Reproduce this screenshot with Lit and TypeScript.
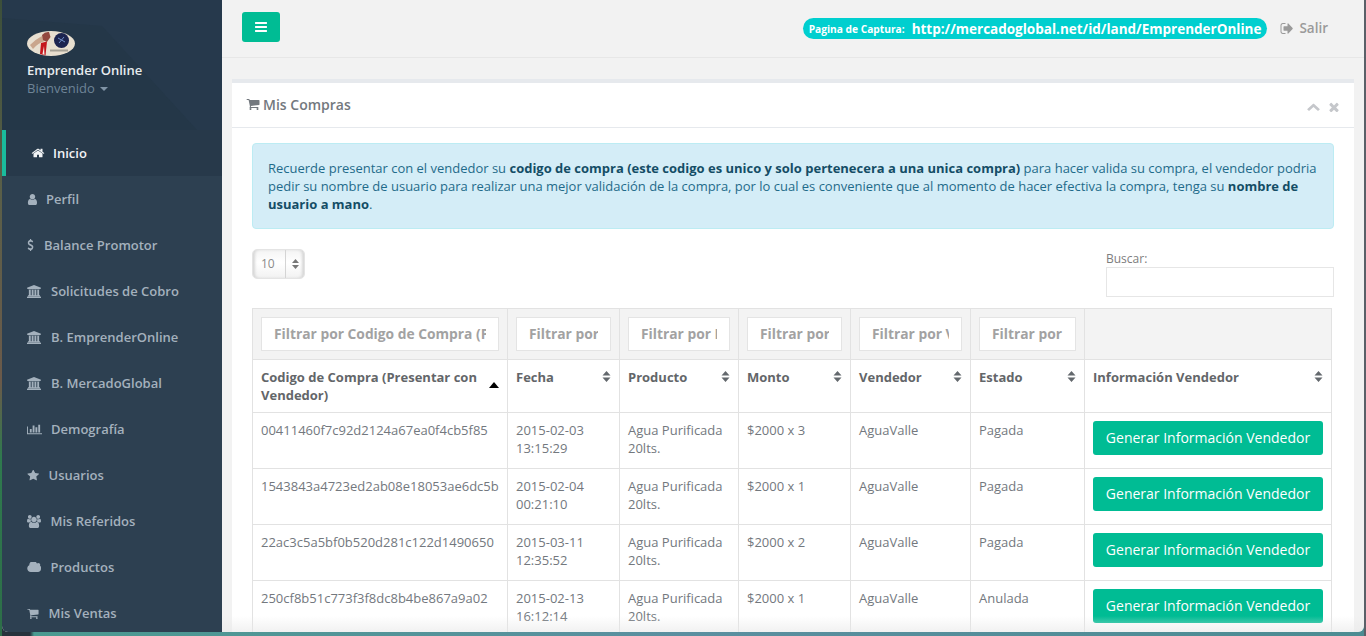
import { LitElement, html, css, svg } from 'lit';
import { customElement } from 'lit/decorators.js';

const ICONS: Record<string, [string, string]> = {
  home: ['0 0 1792 1792', 'M1472 992v480q0 26-19 45t-45 19h-384v-384h-256v384h-384q-26 0-45-19t-19-45v-480q0-1 .5-3t.5-3l575-474 575 474q1 2 1 6zm223-69l-62 74q-8 9-21 11h-3q-13 0-21-7l-692-577-692 577q-12 8-24 7-13-2-21-11l-62-74q-8-10-7-23.5t11-21.5l719-599q32-26 76-26t76 26l244 204v-195q0-14 9-23t23-9h192q14 0 23 9t9 23v408l219 182q10 8 11 21.5t-7 23.5z'],
  user: ['128 128 1408 1536', 'M1536 1399q0 109-62.5 187t-150.5 78h-854q-88 0-150.5-78t-62.5-187q0-85 8.5-160.5t31.5-152 58.5-131 94-89 134.5-34.5q131 128 313 128t313-128q76 0 134.5 34.5t94 89 58.5 131 31.5 152 8.5 160.5zm-256-887q0 159-112.5 271.5t-271.5 112.5-271.5-112.5-112.5-271.5 112.5-271.5 271.5-112.5 271.5 112.5 112.5 271.5z'],
  dollar: ['320 64 1152 1664', 'M1362 1185q0 153-99.5 263.5t-258.5 136.5v175q0 14-9 23t-23 9h-135q-13 0-22.5-9.5t-9.5-22.5v-175q-66-9-127.5-31t-101.5-44.5-74-48-46.5-37.5-17.5-18q-17-21-2-41l103-135q7-10 23-12 15-2 24 9l2 2q113 99 243 125 37 8 74 8 81 0 142.5-43t61.5-122q0-28-15-53t-33.5-42-58.5-37.5-66-32-80-32.5q-39-16-61.5-25t-61.5-26.5-62.5-31-56.5-35.5-53.5-42.5-43.5-49-35.5-58-21-66.5-8.5-78q0-138 98-242t255-134v-180q0-13 9.5-22.5t22.5-9.5h135q14 0 23 9t9 23v176q57 6 110.5 23t87 33.5 63.5 37.5 39 29 15 14q17 18 5 38l-81 146q-8 15-23 16-14 3-27-7-3-3-14.5-12t-39-26.5-58.5-32-74.5-26-85.5-11.5q-95 0-155 43t-60 111q0 26 8.5 48t29.5 41.5 39.5 33 56 31 60.5 27 70 27.5q53 20 81 31.5t76 35 75.5 42.5 62 50 53 63.5 31.5 76.5 13 94z'],
  bank: ['0 0 1920 1792', 'M960 0l960 384v128h-128q0 26-20.5 45t-48.5 19h-1526q-28 0-48.5-19t-20.5-45h-128v-128zm-704 640h256v768h128v-768h256v768h128v-768h256v768h128v-768h256v768h59q28 0 48.5 19t20.5 45v64h-1664v-64q0-26 20.5-45t48.5-19h59v-768zm1595 960q28 0 48.5 19t20.5 45v128h-1920v-128q0-26 20.5-45t48.5-19h1782z'],
  chart: ['0 0 2048 1792', 'M640 896v512h-256v-512h256zm384-512v1024h-256v-1024h256zm1024 1152v128h-2048v-1152h128v1024h1920zm-640-896v768h-256v-768h256zm384-384v1152h-256v-1152h256z'],
  star: ['0 64 1728 1664', 'M1728 647q0 22-26 48l-363 354 86 500q1 7 1 20 0 21-10.5 35.5t-30.5 14.5q-19 0-40-12l-449-236-449 236q-22 12-40 12-21 0-31.5-14.5t-10.5-35.5q0-6 2-20l86-500-364-354q-25-27-25-48 0-37 56-46l502-73 225-455q19-41 49-41t49 41l225 455 502 73q56 9 56 46z'],
  users: ['0 0 1920 1792', 'M593 896q-162 5-265 128h-134q-82 0-138-40.5t-56-118.5q0-353 124-353 6 0 43.5 21t97.5 42.5 119 21.5q67 0 133-23-5 37-5 66 0 139 81 256zm1071 637q0 120-73 189.5t-194 69.5h-874q-121 0-194-69.5t-73-189.5q0-53 3.5-103.5t14-109 26.5-108.5 43-97.5 62-81 85.5-53.5 111.5-20q10 0 43 21.5t73 48 107 48 135 21.5 135-21.5 107-48 73-48 43-21.5q61 0 111.5 20t85.5 53.5 62 81 43 97.5 26.5 108.5 14 109 3.5 103.5zm-1024-1277q0 106-75 181t-181 75-181-75-75-181 75-181 181-75 181 75 75 181zm704 384q0 159-112.5 271.5t-271.5 112.5-271.5-112.5-112.5-271.5 112.5-271.5 271.5-112.5 271.5 112.5 112.5 271.5zm576 225q0 78-56 118.5t-138 40.5h-134q-103-123-265-128 81-117 81-256 0-29-5-66 66 23 133 23 59 0 119-21.5t97.5-42.5 43.5-21q124 0 124 353zm-128-609q0 106-75 181t-181 75-181-75-75-181 75-181 181-75 181 75 75 181z'],
  cloud: ['0 256 1792 1280', 'M1792 1152q0 159-112.5 271.5t-271.5 112.5h-928q-185 0-316.5-131.5t-131.5-316.5q0-132 71-241.5t187-163.5q-2-28-2-43 0-212 150-362t362-150q158 0 286.5 88t187.5 230q70-62 166-62 106 0 181 75t75 181q0 75-41 138 129 30 213 134.5t84 239.5z'],
  cart: ['0 128 1792 1536', 'M704 1536q0 52-38 90t-90 38-90-38-38-90 38-90 90-38 90 38 38 90zm896 0q0 52-38 90t-90 38-90-38-38-90 38-90 90-38 90 38 38 90zm128-1088v512q0 24-16.5 42.5t-40.5 21.5l-1044 122q13 60 13 70 0 16-24 64h920q26 0 45 19t19 45-19 45-45 19h-1024q-26 0-45-19t-19-45q0-11 8-31.5t16-36 21.5-40 15.5-29.5l-177-823h-204q-26 0-45-19t-19-45 19-45 45-19h256q16 0 28.5 6.5t19.5 15.5 13 24.5 8 26 5.5 29.5 4.5 26h1201q26 0 45 19t19 45z'],
  bars: ['128 256 1536 1280', 'M1664 1344v128q0 26-19 45t-45 19h-1408q-26 0-45-19t-19-45v-128q0-26 19-45t45-19h1408q26 0 45 19t19 45zm0-512v128q0 26-19 45t-45 19h-1408q-26 0-45-19t-19-45v-128q0-26 19-45t45-19h1408q26 0 45 19t19 45zm0-512v128q0 26-19 45t-45 19h-1408q-26 0-45-19t-19-45v-128q0-26 19-45t45-19h1408q26 0 45 19t19 45z'],
  signout: ['0 256 1664 1280', 'M704 1440q0 4 1 20t.5 26.5-3 23.5-10 19.5-20.5 6.5h-320q-119 0-203.5-84.5t-84.5-203.5v-704q0-119 84.5-203.5t203.5-84.5h320q13 0 22.5 9.5t9.5 22.5q0 4 1 20t.5 26.5-3 23.5-10 19.5-20.5 6.5h-320q-66 0-113 47t-47 113v704q0 66 47 113t113 47h312l11.5 1 11.5 3 8 5.5 7 9 2 13.5zm928-544q0 26-19 45l-544 544q-19 19-45 19t-45-19-19-45v-288h-448q-26 0-45-19t-19-45v-384q0-26 19-45t45-19h448v-288q0-26 19-45t45-19 45 19l544 544q19 19 19 45z'],
  up: ['64 384 1664 1152', 'M1683 1331l-166 165q-19 19-45 19t-45-19l-531-531-531 531q-19 19-45 19t-45-19l-166-165q-19-19-19-45.5t19-45.5l742-741q19-19 45-19t45 19l742 741q19 19 19 45.5t-19 45.5z'],
  close: ['256 256 1280 1280', 'M1490 1322q0 40-28 68l-136 136q-28 28-68 28t-68-28l-294-294-294 294q-28 28-68 28t-68-28l-136-136q-28-28-28-68t28-68l294-294-294-294q-28-28-28-68t28-68l136-136q28-28 68-28t68 28l294 294 294-294q28-28 68-28t68 28l136 136q28 28 28 68t-28 68l-294 294 294 294q28 28 28 68z'],
};

const icon = (name: string, w: number, h: number) => {
  const [box, d] = ICONS[name];
  return html`<svg class="icon" viewBox=${box} width=${w} height=${h} preserveAspectRatio="none" fill="currentColor">${svg`<path d=${d}></path>`}</svg>`;
};

const MENU = [
  { label: 'Inicio', icon: 'home', w: 14, h: 12, gap: 8, active: true },
  { label: 'Perfil', icon: 'user', w: 10, h: 11, gap: 9 },
  { label: 'Balance Promotor', icon: 'dollar', w: 7, h: 12, gap: 10 },
  { label: 'Solicitudes de Cobro', icon: 'bank', w: 14, h: 13, gap: 10 },
  { label: 'B. EmprenderOnline', icon: 'bank', w: 14, h: 13, gap: 10 },
  { label: 'B. MercadoGlobal', icon: 'bank', w: 14, h: 13, gap: 10 },
  { label: 'Demografía', icon: 'chart', w: 15, h: 12, gap: 9 },
  { label: 'Usuarios', icon: 'star', w: 12, h: 11, gap: 9.5 },
  { label: 'Mis Referidos', icon: 'users', w: 14, h: 13, gap: 9.5 },
  { label: 'Productos', icon: 'cloud', w: 14, h: 10, gap: 9.5 },
  { label: 'Mis Ventas', icon: 'cart', w: 12, h: 11, gap: 9.5 },
];

const HEADERS = ['Codigo de Compra (Presentar con Vendedor)', 'Fecha', 'Producto', 'Monto', 'Vendedor', 'Estado', 'Información Vendedor'];
const FILTERS = ['Codigo de Compra (Presentar con Vendedor)', 'Fecha', 'Producto', 'Monto', 'Vendedor', 'Estado'];

const ROWS = [
  ['00411460f7c92d2124a67ea0f4cb5f85', '2015-02-03 13:15:29', '$2000 x 3', 'Pagada'],
  ['1543843a4723ed2ab08e18053ae6dc5b', '2015-02-04 00:21:10', '$2000 x 1', 'Pagada'],
  ['22ac3c5a5bf0b520d281c122d1490650', '2015-03-11 12:35:52', '$2000 x 2', 'Pagada'],
  ['250cf8b51c773f3f8dc8b4be867a9a02', '2015-02-13 16:12:14', '$2000 x 1', 'Anulada'],
];

@customElement('app-root')
export class AppRoot extends LitElement {
  static styles = css`
    :host {
      display: block;
      position: relative;
      width: 1366px;
      height: 636px;
      overflow: hidden;
      font-family: 'Open Sans', 'Liberation Sans', sans-serif;
      font-size: 13px;
      color: #73787e;
      background: linear-gradient(90deg, #26323c 0, #26323c 30px, #4a9a90 34px, #5b8fa0 50%, #4c8c92 100%);
    }
    .left-edge {
      position: absolute;
      left: 0;
      top: 0;
      width: 2px;
      height: 636px;
      background: linear-gradient(180deg, #3c4f3a 0, #5a5f48 30%, #6b5a4a 60%, #2f7a4e 72%, #2d6e48 100%);
    }
    .right-edge {
      position: absolute;
      right: 0;
      top: 0;
      width: 2px;
      height: 636px;
      background: #5a6068;
    }
    .window {
      position: absolute;
      left: 2px;
      top: 0;
      width: 1362px;
      height: 632px;
      display: flex;
      overflow: hidden;
      border-radius: 0 0 6px 6px;
      background: #f2f2f2;
    }
    .icon {
      display: block;
      flex: none;
    }

    .sidebar {
      width: 220px;
      flex: none;
      background: #2d4051;
      display: flex;
      flex-direction: column;
    }
    .profile {
      position: relative;
      flex: none;
      height: 130px;
      box-sizing: border-box;
      padding: 31px 0 0 25px;
      background: #26394c;
      overflow: hidden;
    }
    .profile::before {
      content: '';
      position: absolute;
      inset: 0;
      background: #243748;
      clip-path: polygon(0 18px, 100px 26px, 195px 130px, 0 130px);
    }
    .profile > * {
      position: relative;
    }
    .logo {
      display: block;
      width: 48px;
      height: 25px;
    }
    .brand {
      margin-top: 5px;
      font-size: 13px;
      line-height: 18px;
      font-weight: 600;
      color: #e7ebee;
    }
    .welcome {
      display: flex;
      align-items: center;
      gap: 5px;
      font-size: 13px;
      line-height: 18px;
      color: #6e8497;
    }
    .caret {
      width: 0;
      height: 0;
      margin-top: 2px;
      border-left: 4px solid transparent;
      border-right: 4px solid transparent;
      border-top: 4px solid #8094a6;
    }
    .item {
      flex: none;
      height: 46px;
      box-sizing: border-box;
      padding-left: 25px;
      display: flex;
      align-items: center;
      font-size: 13px;
      font-weight: 600;
      color: #a4b1bd;
    }
    .item.active {
      background: #27394a;
      border-left: 4px solid #1abb9c;
      padding-left: 25px;
      color: #f1f3f5;
    }

    .main {
      flex: 1;
      min-width: 0;
      position: relative;
    }
    .main::after {
      content: '';
      position: absolute;
      left: 0;
      right: 0;
      bottom: 0;
      height: 16px;
      background: linear-gradient(180deg, rgba(232, 232, 232, 0), rgba(232, 232, 232, 0.6));
      pointer-events: none;
    }
    .topbar {
      height: 58px;
      box-sizing: border-box;
      border-bottom: 1px solid #e7e7e7;
      padding: 12px 36px 0 20px;
      display: flex;
      align-items: flex-start;
    }
    .toggle {
      width: 38px;
      height: 30px;
      border-radius: 3px;
      background: #00bc94;
      color: #fff;
      display: flex;
      align-items: center;
      justify-content: center;
    }
    .capture {
      margin-left: auto;
      margin-top: 6px;
      height: 21px;
      box-sizing: border-box;
      padding: 0 6px;
      border-radius: 11px;
      background: #00cfcf;
      color: #fff;
      font-weight: 700;
      display: flex;
      align-items: center;
      white-space: nowrap;
    }
    .capture small {
      font-size: 10.2px;
      margin-right: 7px;
    }
    .capture span {
      font-size: 13.5px;
    }
    .logout {
      margin: 6px 0 0 13px;
      display: flex;
      align-items: center;
      gap: 6px;
      height: 20px;
      color: #9a9a9a;
      font-size: 13.5px;
      font-weight: 600;
    }

    .panel {
      margin: 21px 10px 0 10px;
      background: #fff;
      border-top: 4px solid #e6e9ed;
      padding: 0 20px;
      height: 600px;
    }
    .panel-head {
      height: 45px;
      box-sizing: border-box;
      margin: 0 -20px;
      padding: 0 15px 2px 14px;
      border-bottom: 1px solid #e6e9ed;
      display: flex;
      align-items: center;
    }
    .panel-title {
      display: flex;
      align-items: center;
      gap: 3px;
      font-size: 14px;
      font-weight: 600;
      color: #73787e;
    }
    .tools {
      margin-left: auto;
      display: flex;
      gap: 9px;
      align-items: center;
      margin-top: 6px;
      color: #c5c7cb;
    }
    .alert {
      margin-top: 15px;
      height: 86px;
      box-sizing: border-box;
      padding: 15px 15px;
      border: 1px solid #bcecf3;
      border-radius: 4px;
      background: #d4edf7;
      color: #1f6b8a;
      font-size: 12.99px;
      line-height: 18px;
    }
    .alert b {
      color: #144d66;
    }
    .controls {
      margin-top: 20px;
      height: 59px;
      display: flex;
      justify-content: space-between;
    }
    .select {
      width: 53px;
      height: 30px;
      box-sizing: border-box;
      border-radius: 5px;
      border: 1px solid #e4e4e4;
      background: linear-gradient(180deg, #f4f4f4, #fff 45%, #f2f2f2);
      box-shadow: inset 3px 0 3px -1px #d6d6d6, inset -3px 0 3px -1px #d6d6d6;
      display: flex;
      align-items: center;
      font-size: 12px;
      color: #8a8a8a;
    }
    .select .value {
      width: 33px;
      height: 100%;
      box-sizing: border-box;
      padding-left: 8px;
      line-height: 28px;
      border-right: 1px solid #d4d4d4;
    }
    .select svg {
      margin-left: 6px;
    }
    .search {
      width: 228px;
      margin-top: 1px;
      color: #7d7d7d;
      font-size: 12px;
      line-height: 17px;
    }
    .search div {
      height: 30px;
      box-sizing: border-box;
      border: 1px solid #e6e6e6;
      background: #fff;
    }

    table {
      width: 1079px;
      table-layout: fixed;
      border-collapse: collapse;
      font-size: 13px;
      line-height: 18px;
    }
    col:nth-child(1) { width: 255px; }
    col:nth-child(2) { width: 112px; }
    col:nth-child(3) { width: 119px; }
    col:nth-child(4) { width: 112px; }
    col:nth-child(5) { width: 120px; }
    col:nth-child(6) { width: 114px; }
    col:nth-child(7) { width: 247px; }
    th, td {
      border: 1px solid #e2e2e2;
      padding: 8px;
      text-align: left;
      vertical-align: top;
      box-sizing: border-box;
    }
    .filters th {
      background: #f3f3f3;
      height: 51px;
    }
    .filters input {
      display: block;
      width: 100%;
      height: 34px;
      box-sizing: border-box;
      padding: 0 12px 2px;
      border: 1px solid #e4e4e4;
      background: #fff;
      outline: none;
      font: 700 13.8px 'Open Sans', sans-serif;
    }
    .filters input::placeholder {
      color: #a2a2a2;
      opacity: 1;
    }
    .heads th {
      height: 53px;
      font-weight: 700;
      color: #636669;
    }
    .heads .cell {
      display: flex;
      justify-content: space-between;
      gap: 8px;
    }
    .heads svg {
      flex: none;
      margin-top: 3px;
    }
    .heads .sorted svg {
      margin-top: 14px;
    }
    tbody td {
      height: 56px;
      color: #73787e;
    }
    .btn {
      height: 34px;
      border-radius: 3px;
      background: #00bc94;
      color: #fff;
      font-size: 14px;
      display: flex;
      align-items: center;
      justify-content: center;
      white-space: nowrap;
    }
  `;

  private sortIcon(dir: 'both' | 'up') {
    if (dir === 'up') {
      return html`<svg width="10" height="6" viewBox="0 0 10 6" fill="#000"><path d="M0 6 L5 0 L10 6 Z"></path></svg>`;
    }
    return html`<svg width="9" height="11" viewBox="0 0 9 11" fill="#63686d"><path d="M0.5 4.5 L4.5 0 L8.5 4.5 Z M0.5 6.5 L4.5 11 L8.5 6.5 Z"></path></svg>`;
  }

  private renderLogo() {
    return html`<svg class="logo" viewBox="0 0 48 25">
      <ellipse cx="24" cy="12.500" rx="24" ry="12.500" fill="#e8dfd0"></ellipse>
      <path d="M3 14 Q9 8 15 5 L18 10 Q11 12 6 18 Z" fill="#c9a58c"></path>
      <path d="M15 4 Q18 0.500 22 1 L23.500 6 L20 11 L16 9 Z" fill="#93483f"></path>
      <path d="M14 12 L20 10.500 L18.500 24.500 L13 23 Z" fill="#c4161c"></path>
      <path d="M15.500 23 L17 15 L17.500 24 Z" fill="#f6f0ea"></path>
      <circle cx="34.500" cy="9.500" r="7.500" fill="#1c2450"></circle>
      <path d="M31 7 L38 11 M37 6 L32 12" stroke="#6f8fc8" stroke-width="1"></path>
      <rect x="23" y="18.500" width="18" height="2" fill="#a5a196"></rect>
    </svg>`;
  }

  render() {
    return html`
      <div class="left-edge"></div>
      <div class="right-edge"></div>
      <div class="window">
        <aside class="sidebar">
          <div class="profile">
            ${this.renderLogo()}
            <div class="brand">Emprender Online</div>
            <div class="welcome">Bienvenido <i class="caret"></i></div>
          </div>
          ${MENU.map(
            (m) => html`<div class="item ${m.active ? 'active' : ''}">
              ${icon(m.icon, m.w, m.h)}
              <span style="margin-left:${m.gap}px">${m.label}</span>
            </div>`
          )}
        </aside>
        <div class="main">
          <div class="topbar">
            <div class="toggle">${icon('bars', 12, 10)}</div>
            <div class="capture">
              <small>Pagina de Captura:</small>
              <span>http://mercadoglobal.net/id/land/EmprenderOnline</span>
            </div>
            <div class="logout">${icon('signout', 13, 11)} Salir</div>
          </div>
          <section class="panel">
            <div class="panel-head">
              <div class="panel-title">${icon('cart', 14, 12)} Mis Compras</div>
              <div class="tools">${icon('up', 13, 8)} ${icon('close', 10, 10)}</div>
            </div>
            <div class="alert">
              Recuerde presentar con el vendedor su <b>codigo de compra (este codigo es unico y solo pertenecera a una unica compra)</b> para hacer valida su compra, el vendedor podria pedir su nombre de usuario para realizar una mejor validación de la compra, por lo cual es conveniente que al momento de hacer efectiva la compra, tenga su <b>nombre de usuario a mano</b>.
            </div>
            <div class="controls">
              <div class="select">
                <div class="value">10</div>
                <svg width="7" height="10" viewBox="0 0 7 10" fill="#777"><path d="M0 4 L3.500 0 L7 4 Z M0 6 L3.500 10 L7 6 Z"></path></svg>
              </div>
              <div class="search">Buscar:<div></div></div>
            </div>
            <table>
              <colgroup><col /><col /><col /><col /><col /><col /><col /></colgroup>
              <thead>
                <tr class="filters">
                  ${FILTERS.map((f) => html`<th><input placeholder="Filtrar por ${f}" /></th>`)}
                  <th></th>
                </tr>
                <tr class="heads">
                  ${HEADERS.map(
                    (h, i) => html`<th>
                      <div class="cell ${i === 0 ? 'sorted' : ''}">
                        <span>${h}</span>${this.sortIcon(i === 0 ? 'up' : 'both')}
                      </div>
                    </th>`
                  )}
                </tr>
              </thead>
              <tbody>
                ${ROWS.map(
                  (r) => html`<tr>
                    <td>${r[0]}</td>
                    <td>${r[1]}</td>
                    <td>Agua Purificada 20lts.</td>
                    <td>${r[2]}</td>
                    <td>AguaValle</td>
                    <td>${r[3]}</td>
                    <td><div class="btn">Generar Información Vendedor</div></td>
                  </tr>`
                )}
              </tbody>
            </table>
          </section>
        </div>
      </div>
    `;
  }
}
